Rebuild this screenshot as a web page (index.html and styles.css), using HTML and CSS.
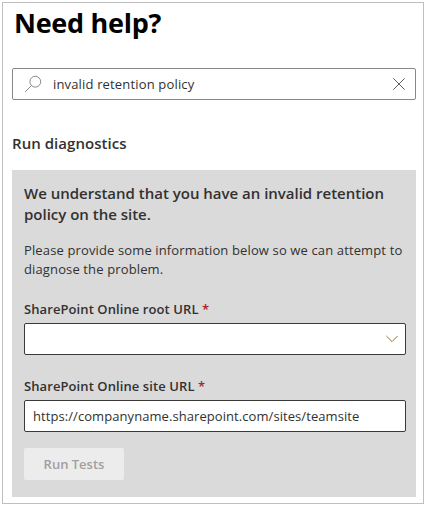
FILE: index.html
```html
<!DOCTYPE html>
<html lang="en">
<head>
<meta charset="utf-8">
<title>Need help?</title>
<link rel="stylesheet" href="styles.css">
</head>
<body>
<main class="pane">
  <h1 class="title">Need help?</h1>
  <div class="search">
    <svg class="search-icon" width="18" height="18" viewBox="0 0 18 18"><circle cx="11.3" cy="6.7" r="5.4"/><path d="M7.5 10.5 1 17"/></svg>
    <span class="query">invalid retention policy</span>
    <svg class="clear-icon" width="12" height="12" viewBox="0 0 12 12"><path d="M.3.3 11.7 11.7M11.7.3.3 11.7"/></svg>
  </div>
  <h2 class="section">Run diagnostics</h2>
  <section class="card">
    <h3 class="card-title">We understand that you have an invalid retention<br>policy on the site.</h3>
    <p class="hint">Please provide some information below so we can attempt to<br>diagnose the problem.</p>
    <div class="label">SharePoint Online root URL <span class="required">*</span></div>
    <div class="field select"><svg class="chevron" width="12" height="8" viewBox="0 0 12 8"><path d="M.4 1 6 6.6 11.6 1"/></svg></div>
    <div class="label label-site">SharePoint Online site URL <span class="required">*</span></div>
    <div class="field"><span class="url">https://companyname.sharepoint.com/sites/teamsite</span></div>
    <button class="run" disabled>Run Tests</button>
  </section>
</main>
</body>
</html>
```
FILE: styles.css
```css
* { box-sizing: border-box; }
body {
  margin: 0;
  padding: 2px;
  background: #fff;
  color: #323130;
  font: 13px/19px "Open Sans", "Noto Sans", sans-serif;
  white-space: nowrap;
}
h1, h2, h3, p { margin: 0; }
svg { fill: none; flex: none; }
.pane {
  width: 422px;
  height: 502px;
  padding: 0 7px 0 9px;
  border: 1px solid #bfbfbf;
}
.title {
  height: 65px;
  padding-left: 2px;
  color: #000;
  font-size: 27px;
  font-weight: 700;
  letter-spacing: -.28px;
  line-height: 40px;
}
.search {
  display: flex;
  align-items: center;
  height: 32px;
  padding: 0 10px 0 11px;
  border: 1px solid #8a8886;
  border-radius: 2px;
}
.search-icon { stroke: #8a8886; }
.query { flex: 1; margin-left: 11px; letter-spacing: .16px; }
.clear-icon { stroke: #605e5c; }
.section {
  height: 70px;
  padding-top: 33px;
  font-size: 15px;
  font-weight: 600;
  letter-spacing: .05px;
  line-height: 21px;
}
.card {
  height: 327px;
  padding: 13px 10px 0 12px;
  background: #dadada;
}
.card-title { font-size: 15px; font-weight: 600; letter-spacing: -.01px; line-height: 21px; }
.hint { margin-top: 16px; letter-spacing: .13px; }
.label { margin-top: 21px; margin-bottom: 4px; font-weight: 600; letter-spacing: .09px; }
.label-site { margin-top: 22px; }
.required { color: #a4262c; font-weight: 600; }
.field {
  display: flex;
  align-items: center;
  height: 32px;
  padding: 0 8px;
  border: 1px solid #3b3a39;
  border-radius: 2px;
  background: #fff;
}
.url { letter-spacing: .07px; }
.select { justify-content: flex-end; padding-right: 7px; }
.chevron { stroke: #a0703c; }
.run {
  display: block;
  width: 100px;
  height: 32px;
  margin-top: 16px;
  padding: 0;
  border: 0;
  border-radius: 2px;
  background: #ececec;
  color: #a19f9d;
  font: 600 13px/20px "Open Sans", "Noto Sans", sans-serif;
}
```
